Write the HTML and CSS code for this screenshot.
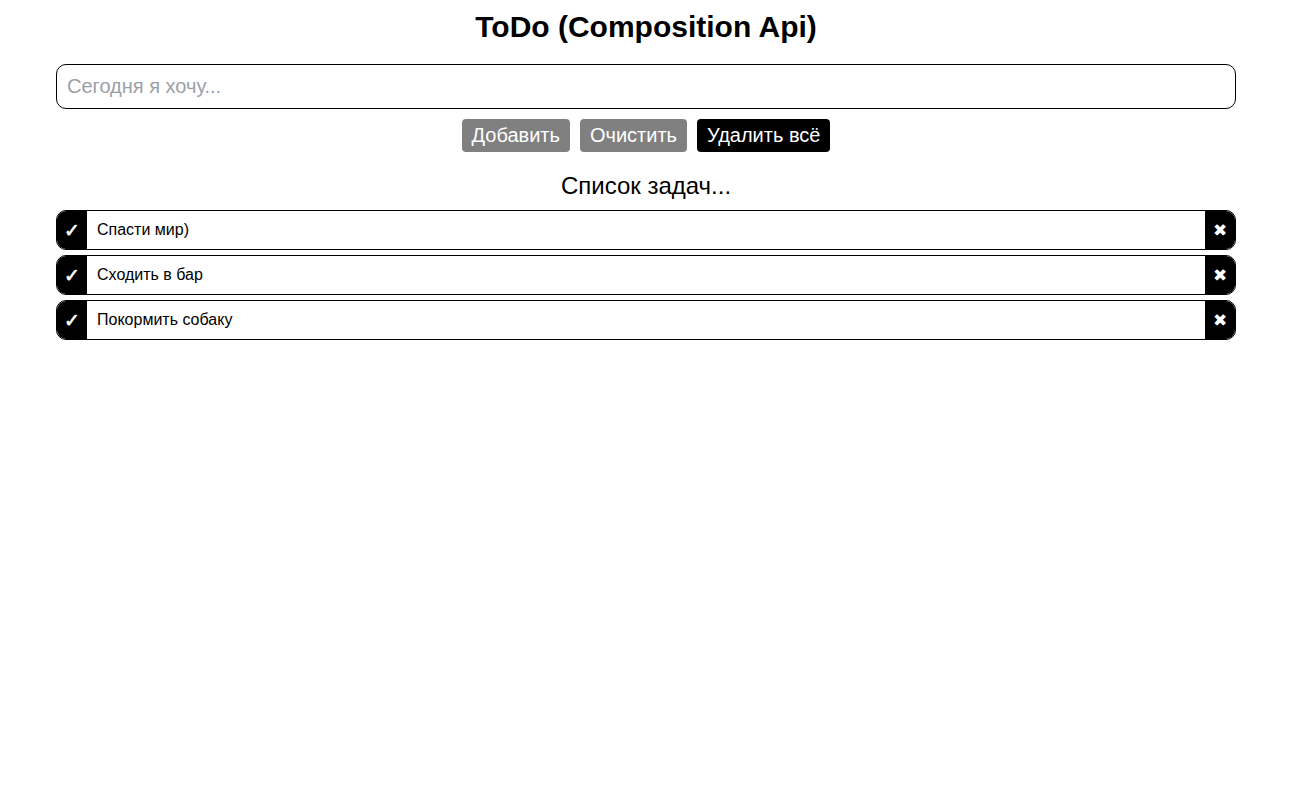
FILE: index.html
```html
<!DOCTYPE html>
<html lang="ru">
<head>
<meta charset="utf-8">
<title>ToDo (Composition Api)</title>
<link rel="stylesheet" href="styles.css">
</head>
<body>
<div class="app">
  <h1 class="title">ToDo (Composition Api)</h1>
  <input class="field" type="text" placeholder="Сегодня я хочу..." autofocus>
  <div class="actions">
    <button class="btn btn-gray">Добавить</button>
    <button class="btn btn-gray">Очистить</button>
    <button class="btn btn-black">Удалить всё</button>
  </div>
  <p class="subtitle">Список задач...</p>
  <ul class="list">
    <li class="item"><span class="side check">✓</span><span class="text">Спасти мир)</span><span class="side del">✖</span></li>
    <li class="item"><span class="side check">✓</span><span class="text">Сходить в бар</span><span class="side del">✖</span></li>
    <li class="item"><span class="side check">✓</span><span class="text">Покормить собаку</span><span class="side del">✖</span></li>
  </ul>
</div>
</body>
</html>
```
FILE: styles.css
```css
html, body {
  margin: 0;
  padding: 0;
  background: #fff;
}
body {
  font-family: "Liberation Sans", Arial, sans-serif;
  color: #000;
}
.app {
  width: 1180px;
  margin: 0 auto;
  padding-top: 8px;
  display: flex;
  flex-direction: column;
}
.title {
  margin: 0 0 19px;
  font-size: 30px;
  font-weight: bold;
  text-align: center;
  line-height: 37px;
}
.field {
  box-sizing: border-box;
  width: 100%;
  height: 45px;
  margin: 0;
  padding: 0 10px;
  border: 1px solid #000;
  border-radius: 10px;
  font-family: "Liberation Sans", Arial, sans-serif;
  font-size: 20px;
  color: #000;
  outline: none;
  caret-color: #000;
}
.field::placeholder {
  color: #9ca0a6;
}
.actions {
  margin-top: 10px;
  display: flex;
  justify-content: center;
  gap: 10px;
}
.btn {
  box-sizing: border-box;
  height: 33px;
  padding: 0 10px;
  border: none;
  border-radius: 4px;
  font-family: "Liberation Sans", Arial, sans-serif;
  font-size: 20px;
  line-height: 33px;
  color: #fff;
  cursor: pointer;
}
.btn-gray {
  background: #808080;
}
.btn-black {
  background: #000;
}
.subtitle {
  margin: 20px 0 10px;
  font-size: 24px;
  line-height: 28px;
  text-align: center;
}
.list {
  list-style: none;
  margin: 0;
  padding: 0;
  display: flex;
  flex-direction: column;
  gap: 5px;
}
.item {
  box-sizing: border-box;
  height: 40px;
  border: 1px solid #000;
  border-radius: 10px;
  overflow: hidden;
  display: flex;
  align-items: stretch;
}
.side {
  width: 30px;
  flex: none;
  background: #000;
  color: #fff;
  display: flex;
  align-items: center;
  justify-content: center;
  font-family: "DejaVu Sans", sans-serif;
  font-weight: bold;
}
.check {
  font-size: 19px;
  -webkit-text-stroke: 0.6px #fff;
}
.del {
  font-size: 17px;
}
.text {
  flex: 1;
  display: flex;
  align-items: center;
  padding-left: 10px;
  font-size: 16px;
}
```
